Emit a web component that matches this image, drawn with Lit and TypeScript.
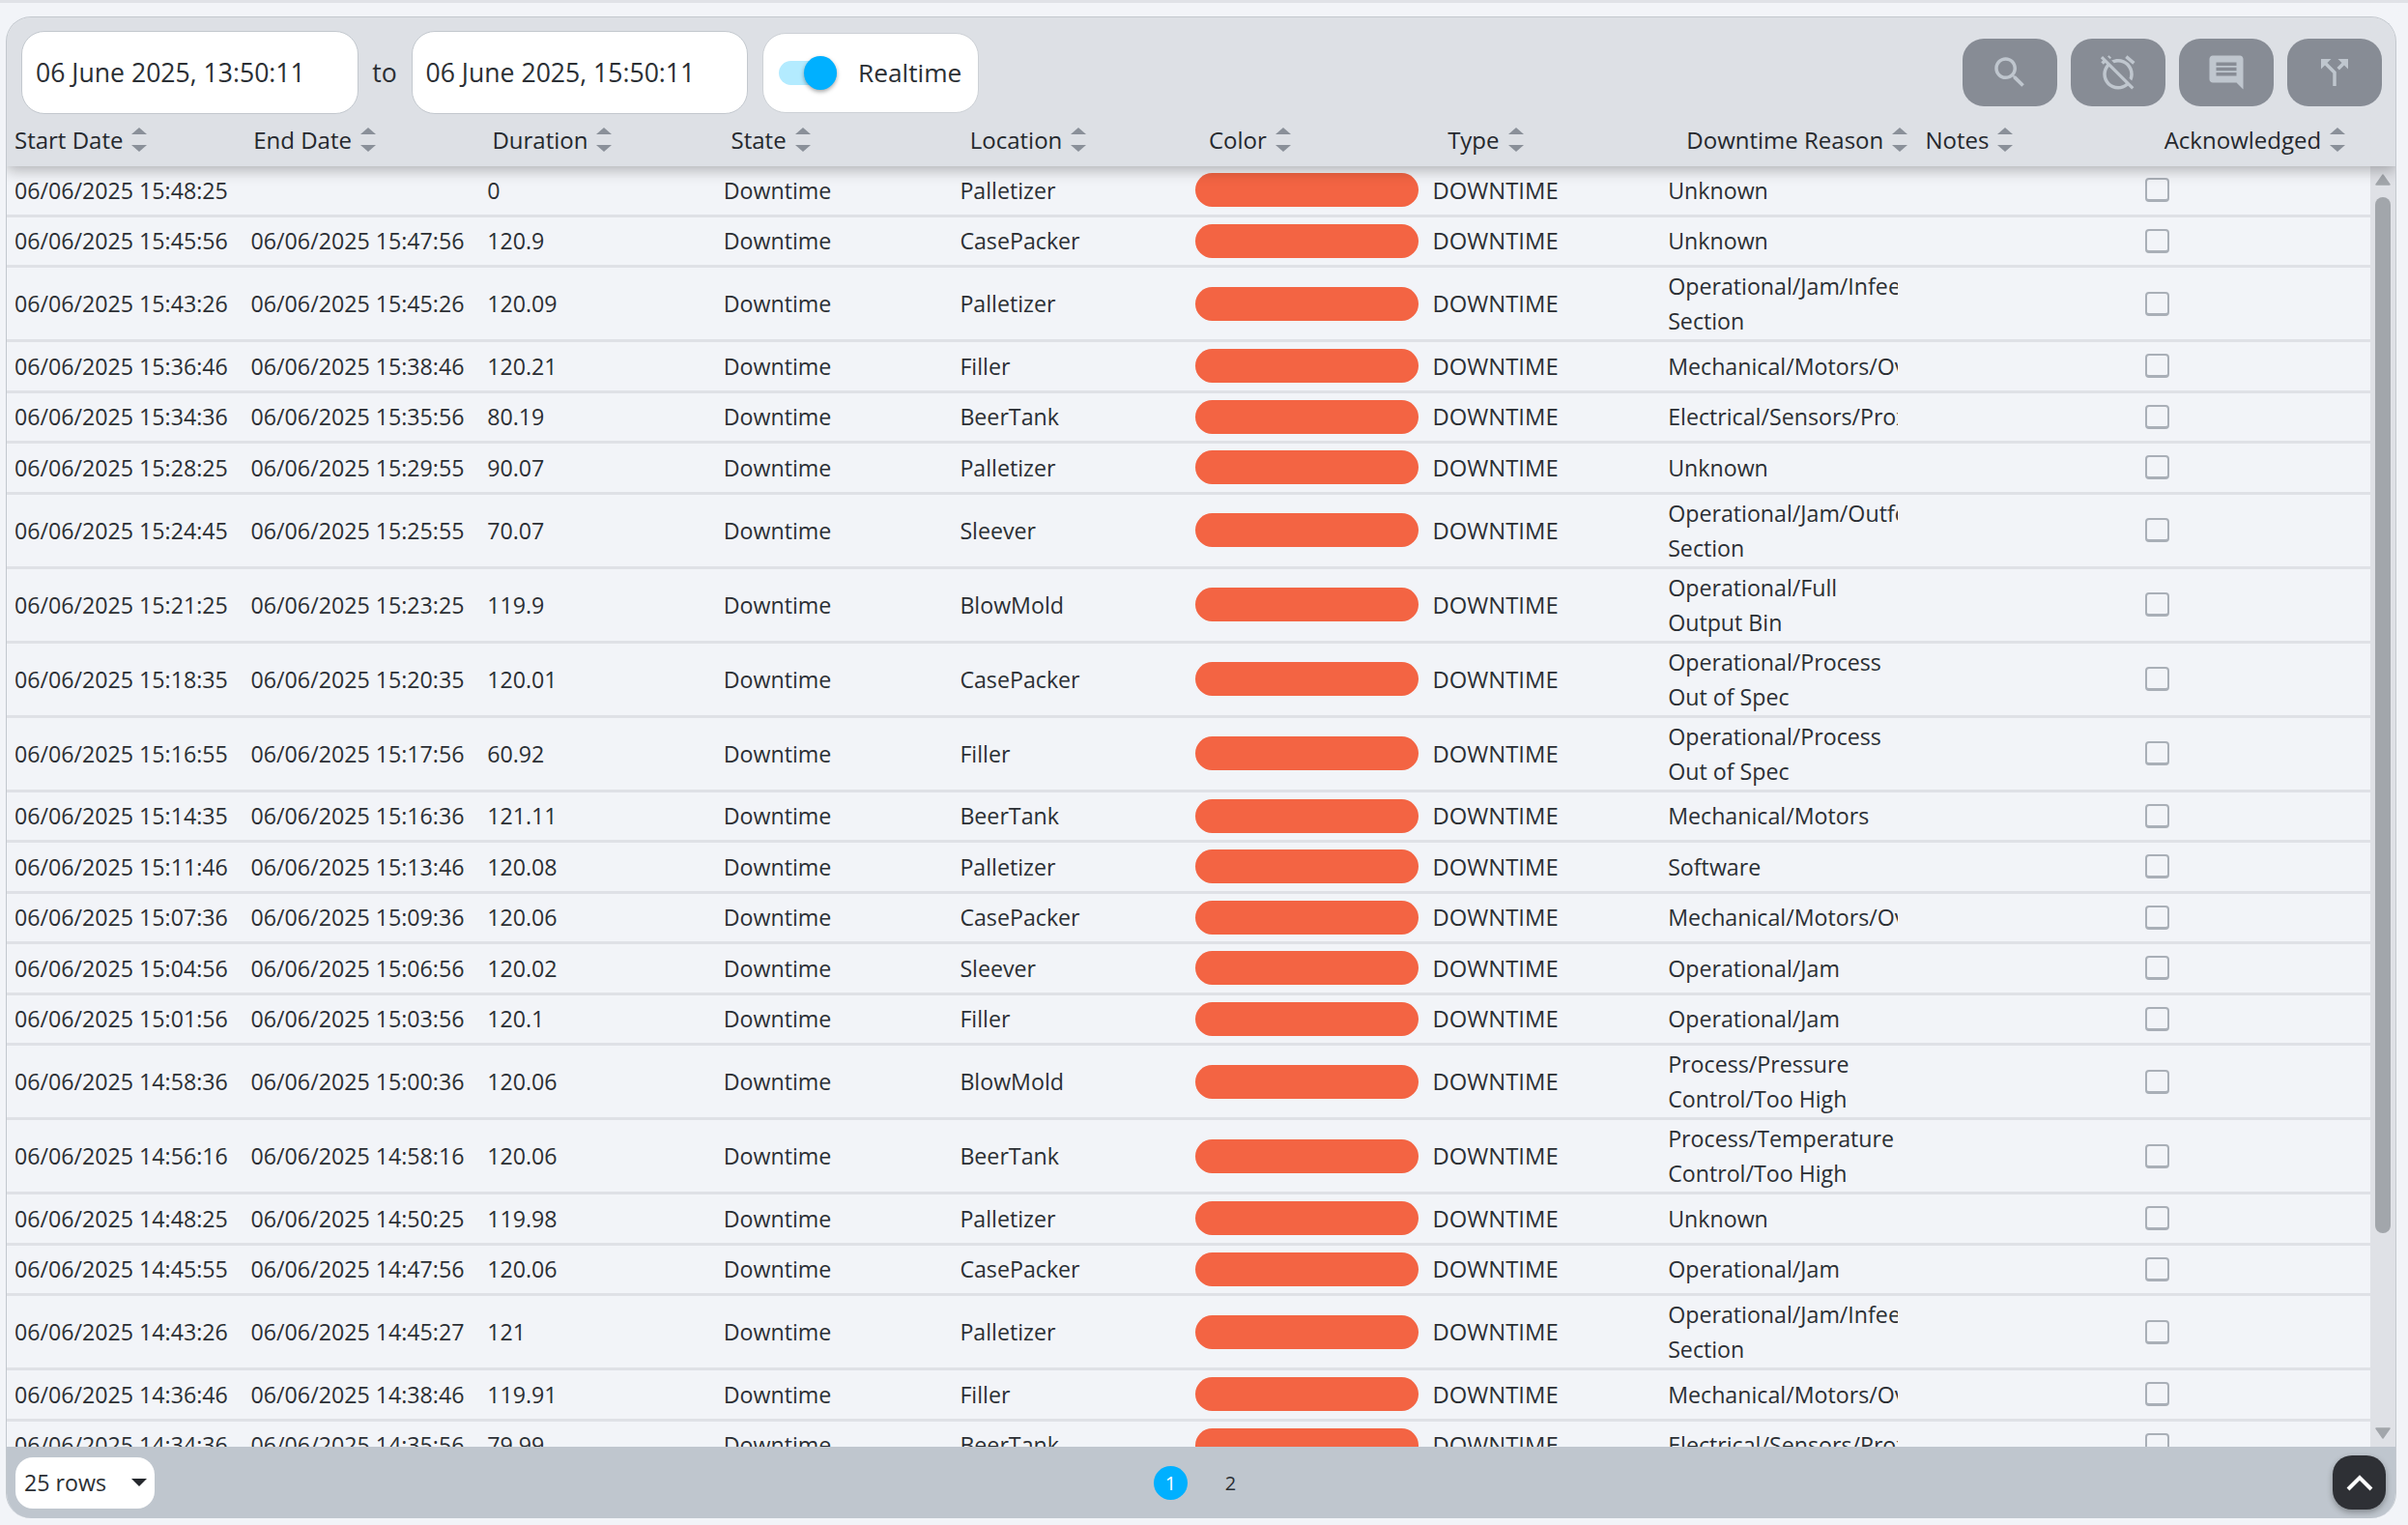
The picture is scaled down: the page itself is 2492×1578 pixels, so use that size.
import { LitElement, html, css, svg } from "lit";
import { customElement } from "lit/decorators.js";

const rows: [string, string, string, string, string[]][] = [
  ["06/06/2025 15:48:25", "", "0", "Palletizer", ["Unknown"]],
  ["06/06/2025 15:45:56", "06/06/2025 15:47:56", "120.9", "CasePacker", ["Unknown"]],
  ["06/06/2025 15:43:26", "06/06/2025 15:45:26", "120.09", "Palletizer", ["Operational/Jam/Infeed", "Section"]],
  ["06/06/2025 15:36:46", "06/06/2025 15:38:46", "120.21", "Filler", ["Mechanical/Motors/Overload"]],
  ["06/06/2025 15:34:36", "06/06/2025 15:35:56", "80.19", "BeerTank", ["Electrical/Sensors/Proximity"]],
  ["06/06/2025 15:28:25", "06/06/2025 15:29:55", "90.07", "Palletizer", ["Unknown"]],
  ["06/06/2025 15:24:45", "06/06/2025 15:25:55", "70.07", "Sleever", ["Operational/Jam/Outfeed", "Section"]],
  ["06/06/2025 15:21:25", "06/06/2025 15:23:25", "119.9", "BlowMold", ["Operational/Full", "Output Bin"]],
  ["06/06/2025 15:18:35", "06/06/2025 15:20:35", "120.01", "CasePacker", ["Operational/Process", "Out of Spec"]],
  ["06/06/2025 15:16:55", "06/06/2025 15:17:56", "60.92", "Filler", ["Operational/Process", "Out of Spec"]],
  ["06/06/2025 15:14:35", "06/06/2025 15:16:36", "121.11", "BeerTank", ["Mechanical/Motors"]],
  ["06/06/2025 15:11:46", "06/06/2025 15:13:46", "120.08", "Palletizer", ["Software"]],
  ["06/06/2025 15:07:36", "06/06/2025 15:09:36", "120.06", "CasePacker", ["Mechanical/Motors/Overload"]],
  ["06/06/2025 15:04:56", "06/06/2025 15:06:56", "120.02", "Sleever", ["Operational/Jam"]],
  ["06/06/2025 15:01:56", "06/06/2025 15:03:56", "120.1", "Filler", ["Operational/Jam"]],
  ["06/06/2025 14:58:36", "06/06/2025 15:00:36", "120.06", "BlowMold", ["Process/Pressure", "Control/Too High"]],
  ["06/06/2025 14:56:16", "06/06/2025 14:58:16", "120.06", "BeerTank", ["Process/Temperature", "Control/Too High"]],
  ["06/06/2025 14:48:25", "06/06/2025 14:50:25", "119.98", "Palletizer", ["Unknown"]],
  ["06/06/2025 14:45:55", "06/06/2025 14:47:56", "120.06", "CasePacker", ["Operational/Jam"]],
  ["06/06/2025 14:43:26", "06/06/2025 14:45:27", "121", "Palletizer", ["Operational/Jam/Infeed", "Section"]],
  ["06/06/2025 14:36:46", "06/06/2025 14:38:46", "119.91", "Filler", ["Mechanical/Motors/Overload"]],
  ["06/06/2025 14:34:36", "06/06/2025 14:35:56", "79.99", "BeerTank", ["Electrical/Sensors/Proximity"]],
];

const headers = ["Start Date", "End Date", "Duration", "State", "Location", "Color", "Type", "Downtime Reason", "Notes", "Acknowledged"];

const icons = [
  "M15.5 14h-.79l-.28-.27C15.41 12.59 16 11.11 16 9.5 16 5.91 13.09 3 9.5 3S3 5.91 3 9.5 5.91 16 9.5 16c1.61 0 3.09-.59 4.23-1.57l.27.28v.79l5 4.99L20.49 19l-4.99-5zm-6 0C7.01 14 5 11.99 5 9.5S7.01 5 9.5 5 14 7.01 14 9.5 11.99 14 9.5 14z",
  "M12 6c3.87 0 7 3.13 7 7 0 .84-.16 1.65-.43 2.4l1.52 1.52c.58-1.19.91-2.51.91-3.92 0-4.97-4.03-9-9-9-1.41 0-2.73.33-3.92.91L9.6 6.43C10.35 6.16 11.16 6 12 6zm10-.28l-4.6-3.86-1.29 1.53 4.6 3.86L22 5.72zM2.92 2.29L1.65 3.57 2.98 4.9l-1.11.93 1.42 1.42 1.11-.94.8.8C3.83 8.69 3 10.75 3 13c0 4.97 4.03 9 9 9 2.25 0 4.31-.83 5.89-2.2l2.2 2.2 1.27-1.27L3.89 3.27l-.97-.98zm13.55 16.1C15.26 19.39 13.7 20 12 20c-3.87 0-7-3.13-7-7 0-1.7.61-3.26 1.61-4.47l9.86 9.86zM8.02 3.28L6.6 1.86l-.86.71 1.42 1.42.86-.71z",
  "M4 2h16c1.1 0 2 .9 2 2v18l-4-4H4c-1.1 0-2-.9-2-2V4c0-1.1.9-2 2-2zm2 12h12v-2H6v2zm0-3h12V9H6v2zm0-3h12V6H6v2z",
  "M14 4l2.29 2.29-2.88 2.88 1.42 1.42 2.88-2.88L20 10V4zm-4 0H4v6l2.29-2.29 4.71 4.7V20h2v-8.41l-5.29-5.3z",
];

@customElement("app-root")
export class AppRoot extends LitElement {
  static styles = css`
    :host {
      display: block;
      height: 1578px;
      box-sizing: border-box;
      background: #f2f4f8;
      border-top: 3px solid #e0e2e7;
      padding: 14px 12px 7px 6px;
      font-family: "Open Sans", "Liberation Sans", sans-serif;
      font-size: 23.2px;
      color: #2b2f34;
      overflow: hidden;
    }
    .panel {
      height: 100%;
      box-sizing: border-box;
      border: 1px solid #c3c8ce;
      border-bottom: none;
      border-radius: 26px;
      overflow: hidden;
      display: flex;
      flex-direction: column;
      background: #f2f4f8;
    }
    .top {
      background: #dde0e5;
      position: relative;
      z-index: 2;
      box-shadow: 0 4px 14px rgba(0, 0, 0, 0.28);
    }
    .toolbar {
      height: 114px;
      display: flex;
      align-items: center;
      padding: 0 14px 0 15px;
    }
    .date {
      width: 348.5px;
      height: 86px;
      box-sizing: border-box;
      background: #fff;
      border: 1px solid #c3c8ce;
      border-radius: 24px;
      display: flex;
      align-items: center;
      padding-left: 14px;
      font-size: 26.6px;
      white-space: nowrap;
    }
    .to {
      width: 55px;
      text-align: center;
      font-size: 26.6px;
    }
    .toggle-card {
      width: 224px;
      height: 83px;
      box-sizing: border-box;
      margin-left: 15px;
      background: #fff;
      border: 1px solid #cdd1d6;
      border-radius: 24px;
      display: flex;
      align-items: center;
      padding-left: 16px;
      font-size: 26.3px;
    }
    .track {
      width: 60px;
      height: 25px;
      border-radius: 13px;
      background: #b3ebff;
      display: flex;
      align-items: center;
      justify-content: flex-end;
      margin-right: 22px;
    }
    .knob {
      width: 34px;
      height: 35px;
      border-radius: 50%;
      background: #00b0ff;
      box-shadow: 0 2px 4px rgba(0, 0, 0, 0.35);
    }
    .buttons {
      margin-left: auto;
      display: flex;
      gap: 14px;
    }
    .btn {
      width: 98px;
      height: 70px;
      border-radius: 22px;
      background: #878c95;
      display: flex;
      align-items: center;
      justify-content: center;
    }
    .btn svg {
      width: 42px;
      height: 42px;
      fill: #bfc6ce;
    }
    .head {
      display: grid;
      grid-template-columns: repeat(10, 247.2px);
      height: 40px;
      align-items: start;
    }
    .th {
      padding-left: 8px;
      display: flex;
      align-items: center;
      gap: 9px;
      font-weight: 500;
      font-size: 24px;
      line-height: 25px;
      white-space: nowrap;
      color: #25282d;
    }
    .sort {
      display: flex;
      flex-direction: column;
      gap: 11px;
    }
    .up,
    .down {
      width: 0;
      height: 0;
      border-left: 8.5px solid transparent;
      border-right: 8.5px solid transparent;
    }
    .up {
      border-bottom: 7px solid #8a9099;
    }
    .down {
      border-top: 7px solid #8a9099;
    }
    .body {
      flex: 1;
      min-height: 0;
      display: flex;
      overflow: hidden;
    }
    .rows {
      width: 2446px;
      flex: none;
      overflow: hidden;
    }
    .row {
      display: grid;
      grid-template-columns: repeat(10, 244.6px);
      height: 52.5px;
      box-sizing: border-box;
      border-bottom: 3px solid #dfe1e6;
      align-items: center;
      line-height: 36px;
    }
    .row.tall {
      height: 77px;
    }
    .td {
      padding-left: 8px;
      overflow: hidden;
      white-space: nowrap;
    }
    .caps {
      font-size: 23.8px;
    }
    .reason {
      padding-left: 7px;
    }
    .pill {
      width: 231px;
      height: 35px;
      border-radius: 17.5px;
      background: #f36443;
    }
    .pillcell {
      padding-left: 7px;
    }
    .check {
      width: 25px;
      height: 25px;
      box-sizing: border-box;
      border: 2.5px solid #a9afb7;
      border-bottom-width: 3px;
      border-radius: 4px;
    }
    .checkcell {
      padding-left: 11.5px;
    }
    .scroll {
      flex: 1;
      background: #dfe1e6;
      display: flex;
      flex-direction: column;
      align-items: center;
      padding: 8px 0 8px;
    }
    .arrow {
      width: 16px;
      height: 12px;
      flex: none;
      fill: #a2a6ab;
      stroke: #a2a6ab;
      stroke-width: 1.5;
      stroke-linejoin: round;
    }
    .arrow.bottom {
      margin-top: auto;
    }
    .thumb {
      width: 16px;
      height: 1072px;
      margin-top: 12px;
      border-radius: 8px;
      background: #a2a6ab;
    }
    .foot {
      height: 74px;
      flex: none;
      background: #bfc6ce;
      display: grid;
      grid-template-columns: 1fr auto 1fr;
      align-items: center;
      padding: 0 10px 0 9px;
    }
    .select {
      width: 144px;
      height: 53px;
      box-sizing: border-box;
      background: #fff;
      border-radius: 18px;
      display: flex;
      align-items: center;
      padding: 0 8px 0 9px;
      justify-content: space-between;
    }
    .caret {
      width: 0;
      height: 0;
      border-left: 8px solid transparent;
      border-right: 8px solid transparent;
      border-top: 8px solid #25282d;
    }
    .pages {
      display: flex;
      gap: 27px;
      font-size: 20px;
    }
    .page {
      width: 35px;
      height: 35px;
      border-radius: 50%;
      display: flex;
      align-items: center;
      justify-content: center;
    }
    .page.on {
      background: #00b0ff;
      color: #fff;
    }
    .up-btn {
      justify-self: end;
      width: 55px;
      height: 56px;
      border-radius: 20px;
      background: #2e3035;
      box-shadow: 0 3px 6px rgba(0, 0, 0, 0.3);
      display: flex;
      align-items: center;
      justify-content: center;
    }
    .up-btn svg {
      width: 30px;
      height: 20px;
      fill: none;
      stroke: #fff;
      stroke-width: 4;
    }
  `;

  render() {
    return html`<div class="panel">
      <div class="top">
        <div class="toolbar">
          <div class="date">06 June 2025, 13:50:11</div>
          <div class="to">to</div>
          <div class="date">06 June 2025, 15:50:11</div>
          <div class="toggle-card">
            <div class="track"><div class="knob"></div></div>
            Realtime
          </div>
          <div class="buttons">
            ${icons.map(
              (d) => html`<div class="btn"><svg viewBox="0 0 24 24">${svg`<path d=${d}></path>`}</svg></div>`
            )}
          </div>
        </div>
        <div class="head">
          ${headers.map(
            (h) => html`<div class="th">
              ${h}
              <div class="sort"><div class="up"></div><div class="down"></div></div>
            </div>`
          )}
        </div>
      </div>
      <div class="body">
        <div class="rows">
          ${rows.map(
            ([s, e, d, loc, reason]) => html`<div class="row ${reason.length > 1 ? "tall" : ""}">
              <div class="td">${s}</div>
              <div class="td">${e}</div>
              <div class="td">${d}</div>
              <div class="td">Downtime</div>
              <div class="td">${loc}</div>
              <div class="td pillcell"><div class="pill"></div></div>
              <div class="td caps">DOWNTIME</div>
              <div class="td reason">${reason.map((l) => html`<div>${l}</div>`)}</div>
              <div class="td"></div>
              <div class="td checkcell"><div class="check"></div></div>
            </div>`
          )}
        </div>
        <div class="scroll">
          <svg class="arrow" viewBox="0 0 16 12"><path d="M8 1L15 11H1z"></path></svg>
          <div class="thumb"></div>
          <svg class="arrow bottom" viewBox="0 0 16 12"><path d="M1 1H15L8 11z"></path></svg>
        </div>
      </div>
      <div class="foot">
        <div class="select">25 rows<div class="caret"></div></div>
        <div class="pages">
          <div class="page on">1</div>
          <div class="page">2</div>
        </div>
        <div class="up-btn">
          <svg viewBox="0 0 30 20"><path d="M3 17L15 5l12 12"></path></svg>
        </div>
      </div>
    </div>`;
  }
}
